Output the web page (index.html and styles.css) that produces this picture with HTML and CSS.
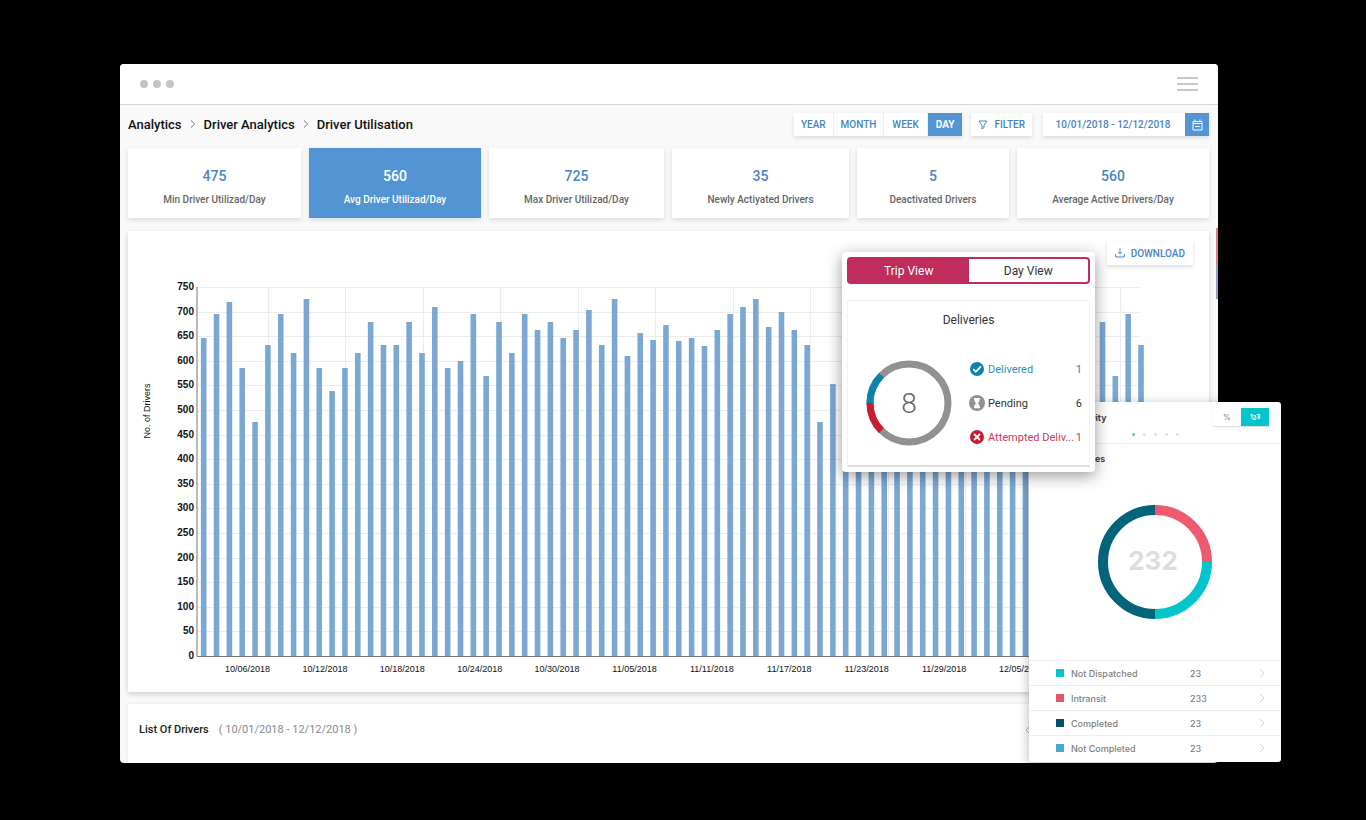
FILE: index.html
```html
<!DOCTYPE html>
<html lang="en">
<head>
<meta charset="utf-8">
<title>Driver Utilisation</title>
<link rel="stylesheet" href="styles.css">
</head>
<body>
<div class="stage">
  <main class="window">
    <header class="chrome">
      <div class="dots"><i></i><i></i><i></i></div>
      <button class="menu" aria-label="Menu"><i></i><i></i><i></i></button>
    </header>
    <div class="content">
      <div class="toolbar">
        <nav class="crumbs" aria-label="Breadcrumb">
          <a href="#">Analytics</a>
          <svg width="6" height="8" viewBox="0 0 6 8"><path d="M1 .5 4.800 4 1 7.500" /></svg>
          <a href="#">Driver Analytics</a>
          <svg width="6" height="8" viewBox="0 0 6 8"><path d="M1 .5 4.800 4 1 7.500" /></svg>
          <a href="#">Driver Utilisation</a>
        </nav>
        <div class="range">
          <button>YEAR</button><button>MONTH</button><button>WEEK</button><button class="on">DAY</button>
        </div>
        <button class="filter">
          <svg width="10" height="10" viewBox="0 0 10 10"><path d="M1 1h8L6 5.200V7.500L4 9V5.200z"/></svg>
          FILTER
        </button>
        <div class="dates">
          <input type="text" value="10/01/2018 - 12/12/2018" aria-label="Date range">
          <button aria-label="Open calendar">
            <svg width="11" height="12" viewBox="0 0 11 12"><path d="M1 2.500h9v8.500H1zM1 4.500h9M3 .5v2M8 .5v2M3 7.500h5"/></svg>
          </button>
        </div>
      </div>
      <section class="stats">
        <div class="stat"><b>475</b><span>Min Driver Utilizad/Day</span></div>
        <div class="stat active"><b>560</b><span>Avg Driver Utilizad/Day</span></div>
        <div class="stat"><b>725</b><span>Max Driver Utilizad/Day</span></div>
        <div class="stat"><b>35</b><span>Newly Actiyated Drivers</span></div>
        <div class="stat"><b>5</b><span>Deactivated Drivers</span></div>
        <div class="stat"><b>560</b><span>Average Active Drivers/Day</span></div>
      </section>
      <section class="chart-card">
        <div class="chart-head">
          <button class="download">
            <svg width="10" height="10" viewBox="0 0 10 10"><path d="M5 .5v5.500M3 4.200l2 2 2-2M.7 6v3h8.600V6"/></svg>
            DOWNLOAD
          </button>
        </div>
        <svg class="chart" id="chart" viewBox="0 0 1081 422" role="img" aria-label="Drivers per day"></svg>
      </section>
      <section class="list-card">
        <h2>List Of Drivers</h2>
        <span>( 10/01/2018 - 12/12/2018 )</span>
        <button aria-label="Previous page"><svg width="6" height="10" viewBox="0 0 6 10"><path d="M5 1 1 5l4 4"/></svg></button>
      </section>
    </div>
    <div class="edge"></div>
  </main>

  <aside class="activity">
    <header>
      <div class="activity-top">
        <h3>Activity</h3>
        <div class="unit"><button>%</button><button class="on">1<small>2</small>3</button></div>
      </div>
      <div class="pager"><i class="on"></i><i></i><i></i><i></i><i></i></div>
    </header>
    <h4>Deliveries</h4>
    <svg class="ring" width="116" height="116" viewBox="-58 -58 116 116">
      <path d="M0-52A52 52 0 0 1 52 0" stroke="#ee5a6f"/>
      <path d="M52 0A52 52 0 0 1 0 52" stroke="#04c5cb"/>
      <path d="M0 52A52 52 0 0 1 0-52" stroke="#02647a"/>
      <text x="-2" y="8">232</text>
    </svg>
    <ul>
      <li><i class="teal"></i><span>Not Dispatched</span><b>23</b><svg width="7" height="10" viewBox="0 0 7 10"><path d="M1 1l4 4-4 4"/></svg></li>
      <li><i class="rose"></i><span>Intransit</span><b>233</b><svg width="7" height="10" viewBox="0 0 7 10"><path d="M1 1l4 4-4 4"/></svg></li>
      <li><i class="navy"></i><span>Completed</span><b>23</b><svg width="7" height="10" viewBox="0 0 7 10"><path d="M1 1l4 4-4 4"/></svg></li>
      <li><i class="sky"></i><span>Not Completed</span><b>23</b><svg width="7" height="10" viewBox="0 0 7 10"><path d="M1 1l4 4-4 4"/></svg></li>
    </ul>
  </aside>

  <aside class="trip">
    <div class="tabs"><button class="on">Trip View</button><button>Day View</button></div>
    <div class="deliveries">
      <h3>Deliveries</h3>
      <div class="body">
        <svg class="donut" width="86" height="86" viewBox="-43 -43 86 86">
          <circle r="39" stroke="#919191"/>
          <path d="M-39 0A39 39 0 0 1-27.600-27.600" stroke="#0a83ad"/>
          <path d="M-39 0A39 39 0 0 0-27.600 27.600" stroke="#cb1a33"/>
          <text y="10">8</text>
        </svg>
        <ul>
          <li class="done"><svg width="16" height="16" viewBox="-8 -8 16 16"><circle r="7" fill="#0a83ad"/><path d="M-3.800.2-1.200 2.800 4-2.600" fill="none" stroke="#fff" stroke-width="1.800"/></svg><span>Delivered</span><b>1</b></li>
          <li><svg width="16" height="16" viewBox="-8 -8 16 16"><circle r="8" fill="#919191"/><path d="M-3-5h6v1.500h-.6v2L1.200-.2v.8l1.200 1.400v1.600H3v1.600h-6V3.600h.6V2L-1.200.6v-.8l-1.200-1.300v-2H-3z" fill="#fff"/></svg><span>Pending</span><b>6</b></li>
          <li class="failed"><svg width="16" height="16" viewBox="-8 -8 16 16"><circle r="7" fill="#cb1a33"/><path d="M-3-3 3 3M3-3-3 3" stroke="#fff" stroke-width="1.800"/></svg><span>Attempted Deliv...</span><b>1</b></li>
        </ul>
      </div>
    </div>
  </aside>
</div>
<script src="chart.js"></script>
</body>
</html>
```
FILE: styles.css
```css
* { box-sizing: border-box; }
body { margin: 0; background: #000; font-family: Roboto, "Liberation Sans", sans-serif; }
button { border: 0; background: none; padding: 0; font: inherit; color: inherit; cursor: pointer; }
h2, h3, h4, ul { margin: 0; padding: 0; font-weight: 500; list-style: none; }
svg { display: block; flex: none; fill: none; }

.stage { position: relative; margin: 64px 148px 56px 120px; }
.window { position: relative; background: #f9f9fa; border-radius: 4px; overflow: hidden; }
.edge { position: absolute; right: 0; top: 164px; width: 2px; height: 71px; background: linear-gradient(#d9455a 45%, #5b7fae 55%); opacity: .7; }

.chrome { display: flex; align-items: center; justify-content: space-between; height: 41px; padding: 0 20px; background: #fff; border-bottom: 1px solid #d4d6d6; }
.dots { display: flex; gap: 5px; }
.dots i { width: 8px; height: 8px; border-radius: 50%; background: #c4c4c4; }
.menu { display: flex; flex-direction: column; gap: 4px; width: 21px; }
.menu i { height: 2px; background: #c8c8c8; }

.content { padding: 8px 9px 0 8px; }
.toolbar { display: flex; align-items: center; height: 23px; color: #4785c4; font-size: 10px; font-weight: 500; }
.crumbs { display: flex; align-items: center; gap: 8px; height: 22px; margin-right: auto; align-self: flex-start; font-size: 13px; }
.crumbs a { color: #111; text-decoration: none; }
.crumbs svg { stroke: #777; }
.range, .filter, .dates { height: 23px; background: #fff; box-shadow: 0 2px 4px rgba(0,0,0,.12); }
.range { display: flex; }
.range button { padding: 0 7px; border-right: 1px solid #eee; }
.range button:nth-child(3) { padding: 0 8px; }
.range .on { padding: 0 8px; border: 0; background: #5395d3; color: #fff; font-weight: 700; }
.filter { display: flex; align-items: center; gap: 6px; margin: 0 11px 0 9px; padding: 0 7px; }
.filter svg, .download svg { stroke: #4785c4; }
.dates { display: flex; }
.dates input { width: 142px; border: 0; padding: 0 2px 0 0; background: none; text-align: center; font: inherit; color: inherit; }
.dates button { display: grid; place-items: center; width: 24px; background: #5395d3; }
.dates svg { stroke: #fff; }

.stats { display: grid; grid-template-columns: 173fr 172fr 175fr 177fr 152fr 192fr; gap: 8px; margin-top: 12px; }
.stat { display: flex; flex-direction: column; align-items: center; gap: 8px; height: 70px; padding-top: 19px; background: #fff; box-shadow: 0 2px 5px rgba(0,0,0,.12); color: #666; }
.stat b { font-size: 14px; line-height: 18px; font-weight: 500; color: #4785c4; }
.stat span { font-size: 10px; line-height: 14px; font-weight: 500; }
.stat.active, .stat.active b { background: #5395d3; color: #fff; }

.chart-card { margin-top: 13px; background: #fff; box-shadow: 0 2px 5px rgba(0,0,0,.18); }
.chart-head { display: flex; justify-content: flex-end; height: 39px; padding: 10px 16px 5px; }
.download { display: flex; align-items: center; gap: 6px; padding: 0 8px; background: #fff; box-shadow: 0 2px 4px rgba(0,0,0,.14); color: #4785c4; font-size: 10px; font-weight: 500; }
.chart { width: 100%; }
.chart text { font-size: 9px; fill: #111; }
.chart .y { font-size: 10px; font-weight: 700; font-family: "Liberation Sans", Arial, sans-serif; text-anchor: end; }
.chart .x, .chart .title { font-family: "Liberation Sans", Arial, sans-serif; text-anchor: middle; }
.chart .grid { stroke: #ececee; }
.chart .axis { stroke: #777; }
.chart rect { fill: #7ba8d3; }

.list-card { display: flex; align-items: center; gap: 10px; height: 59px; margin-top: 12px; padding: 0 178px 8px 11px; background: #fff; box-shadow: 0 0 4px rgba(0,0,0,.08); font-size: 11px; color: #8a8a8a; }
.list-card h2 { font-size: 11px; color: #222; }
.list-card button { margin-left: auto; }
.list-card svg { stroke: #bbb; }

.activity { position: absolute; top: 338px; right: -63px; width: 252px; padding-bottom: 2px; background: #fff; border-radius: 3px; box-shadow: 0 2px 12px rgba(0,0,0,.3); font-family: Inter, sans-serif; color: #808080; }
.activity header { height: 42px; padding: 6px 12px 0 44px; border-bottom: 1px solid #eee; }
.activity-top { display: flex; align-items: center; justify-content: space-between; }
.activity h3, .activity h4 { font-size: 9px; font-weight: 600; color: #333; }
.activity h4 { padding: 9px 0 0 33px; line-height: 11px; }
.unit { display: flex; height: 18px; font-size: 8px; }
.unit button { width: 28px; box-shadow: 0 1px 1px rgba(0,0,0,.12); }
.unit .on { background: #04c5cb; color: #fff; font-size: 6px; font-weight: 700; }
.unit small { font-size: 6px; vertical-align: -1px; }
.pager { display: flex; gap: 8px; margin: 7px 0 0 59px; }
.pager i { width: 3px; height: 3px; border-radius: 50%; background: #e0e0e0; }
.pager .on { background: #3fd8a4; }
.ring { margin: 40px auto; stroke-width: 10; }
.ring text { font-size: 26px; font-weight: 700; fill: #dcdde1; text-anchor: middle; }
.activity li { display: flex; align-items: center; height: 25px; padding: 0 15px 0 27px; border-top: 1px solid #eee; font-size: 9px; }
.activity li i { width: 8px; height: 8px; margin-right: 7px; }
.activity li span { width: 119px; }
.activity li b { font-weight: 500; }
.activity li svg { margin-left: auto; stroke: #d4d4d4; }
.teal { background: #04c5cb; }
.rose { background: #e8546c; }
.navy { background: #02506e; }
.sky { background: #45aacb; }

.trip { position: absolute; top: 188px; right: 123px; width: 253px; padding: 5px; background: #fff; border-radius: 4px; box-shadow: 0 4px 16px rgba(0,0,0,.4); color: #333; }
.tabs { display: grid; grid-template-columns: 1fr 1fr; height: 27px; border: 2px solid #c02c5c; border-radius: 4px; font-size: 12px; }
.tabs .on { background: #c02c5c; color: #fff; }
.deliveries { height: 167px; margin: 16px 0 0; border: 1px solid #f0f0f0; border-bottom: 2px solid #ddd; }
.deliveries h3 { padding-top: 11px; text-align: center; font-size: 12px; line-height: 16px; font-weight: 400; }
.body { display: flex; align-items: center; justify-content: space-between; padding: 24px 7px 0 18px; }
.donut { stroke-width: 7; }
.donut text { font-size: 28px; font-weight: 300; fill: #666; stroke: none; text-anchor: middle; }
.body ul { width: 113px; font-size: 11px; font-weight: 400; }
.body li { display: flex; align-items: center; height: 34px; }
.body li span { margin-left: 3px; white-space: nowrap; }
.body li b { margin-left: auto; font-weight: 400; }
.body .done { color: #2a8fb5; }
.body .failed { color: #c73b5b; }
```
FILE: chart.js
```js
const tops = [338, 314, 302, 368, 422, 345, 314, 353, 299, 368, 391, 368, 353, 322, 345, 345, 322, 353, 307, 368, 361,
  314, 376, 322, 353, 314, 330, 322, 338, 330, 310, 345, 299, 356, 333, 340, 325, 341, 338, 346, 330, 314, 307, 299,
  327, 312, 330, 345, 422, 384, 338, 322, 345, 330, 314, 345, 338, 330, 322, 345, 361, 338, 330, 322, 345, 338, 330,
  322, 345, 338, 322, 376, 314, 345];
const dates = ['10/06/2018', '10/12/2018', '10/18/2018', '10/24/2018', '10/30/2018', '11/05/2018', '11/11/2018',
  '11/17/2018', '11/23/2018', '11/29/2018', '12/05/2018'];
const base = 386;
let out = '';
for (let v = 0; v <= 750; v += 50) {
  const y = base - v * 0.492;
  out += `<path class="grid" d="M69 ${Math.round(y) + 0.5}H1012"/><text class="y" x="66" y="${Math.round(y) + 3}">${v}</text>`;
}
for (let i = 0; i < 12; i++) {
  out += `<path class="grid" d="M${Math.round(140 + i * 77.45) + 0.5} 17V386"/>`;
}
tops.forEach((t, i) => {
  const y = t - 270;
  out += `<rect x="${72.900 + i * 12.84}" y="${y}" width="5.600" height="${base - y}"/>`;
});
out += '<path class="axis" d="M69 17V386.500H1012"/>';
dates.forEach((d, i) => {
  out += `<text class="x" x="${119.500 + i * 77.4}" y="402">${d}</text>`;
});
out += '<text class="title" transform="translate(22 141) rotate(-90)">No. of Drivers</text>';
document.getElementById('chart').innerHTML = out;
```
